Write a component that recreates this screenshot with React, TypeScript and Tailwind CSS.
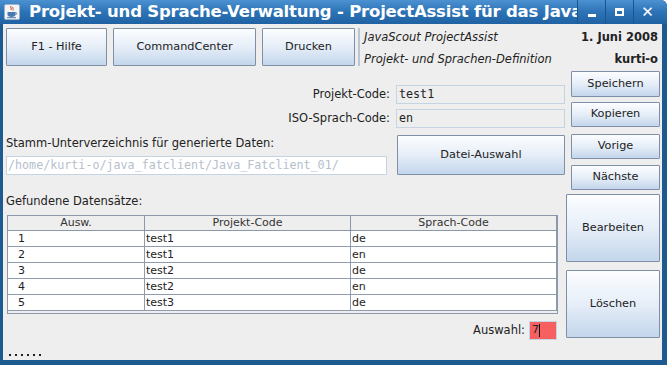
import React from 'react';

const btn =
  'border border-[#7f90a6] bg-gradient-to-b from-[#fcfdff] via-[#e6eef8] to-[#c3d6ec] rounded-[1px] flex items-center justify-center text-[11.3px] text-[#222]';

const rows = [
  ['1', 'test1', 'de'],
  ['2', 'test1', 'en'],
  ['3', 'test2', 'de'],
  ['4', 'test2', 'en'],
  ['5', 'test3', 'de'],
];

function JavaIcon() {
  return (
    <svg width="16" height="16" viewBox="0 0 16 16">
      <rect x="0.5" y="0.5" width="15" height="15" rx="1.5" fill="#f4f4f4" stroke="#9bb4cc" />
      <path d="M7 2c-1 1.5 1 2.5 0 4M9 3c-1 1 1 2 0 3.5" stroke="#d2461f" strokeWidth="1" fill="none" />
      <path d="M3.5 8h8v2.5c0 1.5-1.5 2.5-4 2.5s-4-1-4-2.5z" fill="#4a7bb0" />
      <path d="M11.5 8.5c1.5 0 1.5 2 0 2" stroke="#4a7bb0" fill="none" />
      <rect x="3" y="13.2" width="9" height="1" fill="#4a7bb0" />
    </svg>
  );
}

export default function App() {
  return (
    <div
      className="w-[667px] h-[365px] bg-[#1c5a90] flex flex-col overflow-hidden rounded-tr-[6px]"
      style={{ fontFamily: '"DejaVu Sans", Verdana, sans-serif' }}
    >
      {/* Titelleiste */}
      <div className="h-[24px] shrink-0 flex items-center bg-gradient-to-b from-[#4c92d2] via-[#2c73b6] to-[#1f62a3] text-white">
        <div className="ml-[4px] mr-[9px] flex items-center">
          <JavaIcon />
        </div>
        <div className="flex-1 overflow-hidden whitespace-nowrap font-bold text-[16.5px] leading-[24px] tracking-[-0.2px]">
          Projekt- und Sprache-Verwaltung - ProjectAssist für das Java
        </div>
        <div className="flex h-[24px] items-stretch">
          <div className="w-[28px] flex items-center justify-center border-l border-[#1a5590]">
            <div className="w-[8px] h-[3px] bg-white mt-[6px]" />
          </div>
          <div className="w-[28px] flex items-center justify-center border-l border-[#1a5590]">
            <div className="w-[9px] h-[8px] border-[2px] border-white border-t-[3px]" />
          </div>
          <div className="w-[28px] flex items-center justify-center border-l border-[#1a5590] text-[15px] font-bold">
            ✕
          </div>
          <div className="w-[6px]" />
        </div>
      </div>

      {/* Inhalt */}
      <div className="flex-1 ml-[3px] mr-[5px] mb-[5px] bg-[#eeeeee] flex flex-col text-[#222] text-[11.5px]">
        {/* obere Zeile */}
        <div className="flex items-start pt-[4px] pl-[3px] pr-[4px] h-[42px]">
          <div className={`${btn} w-[101px] h-[38px]`}>F1 - Hilfe</div>
          <div className={`${btn} w-[143px] h-[38px] ml-[6px]`}>CommandCenter</div>
          <div className={`${btn} w-[93px] h-[38px] ml-[6px]`}>Drucken</div>
          <div className="ml-[3px] h-[38px] border-l-[2px] border-[#b9c6d4]" />
          <div className="flex flex-col pl-[4px] -mt-[2px] italic text-[11.5px] leading-[22px]">
            <div>JavaScout ProjectAssist</div>
            <div>Projekt- und Sprachen-Definition</div>
          </div>
          <div className="ml-auto flex flex-col items-end -mt-[2px] font-bold text-[11.5px] leading-[22px]">
            <div>1. Juni 2008</div>
            <div>kurti-o</div>
          </div>
        </div>

        {/* Hauptbereich */}
        <div className="flex pl-[3px]">
          {/* linke Spalte */}
          <div className="w-[559px] flex flex-col">
            <div className="mt-[19px] flex items-center justify-end">
              <span className="mr-[6px]">Projekt-Code:</span>
              <div className="w-[169px] h-[19px] border border-[#c5d4e3] bg-[#eeeeee] pl-[2px] flex items-center text-[11.7px]" style={{ fontFamily: '"DejaVu Sans Mono", monospace' }}>
                test1
              </div>
            </div>
            <div className="mt-[5px] flex items-center justify-end">
              <span className="mr-[6px]">ISO-Sprach-Code:</span>
              <div className="w-[169px] h-[19px] border border-[#c5d4e3] bg-[#eeeeee] pl-[2px] flex items-center text-[11.7px]" style={{ fontFamily: '"DejaVu Sans Mono", monospace' }}>
                en
              </div>
            </div>
            <div className="mt-[7px] flex items-start">
              <div className="w-[383px] flex flex-col">
                <div className="mt-[1px] leading-[14px]">Stamm-Unterverzeichnis für generierte Daten:</div>
                <div
                  className="mt-[6px] h-[19px] border border-[#c5d4e3] bg-white pl-[1px] flex items-center text-[11.7px] text-[#b5c0cc] whitespace-nowrap overflow-hidden"
                  style={{ fontFamily: '"DejaVu Sans Mono", monospace' }}
                >
                  /home/kurti-o/java_fatclient/Java_Fatclient_01/
                </div>
              </div>
              <div className={`${btn} ml-[10px] w-[169px] h-[40px]`}>Datei-Auswahl</div>
            </div>
            <div className="mt-[20px] leading-[13px]">Gefundene Datensätze:</div>

            {/* Tabelle */}
            <div className="mt-[7px] ml-[1px] w-[551px] border border-[#8a98aa] bg-[#eeeeee] text-[11px]">
              <div className="grid grid-cols-[137px_206px_206px] bg-[#eeeeee] text-[#333] border-b border-[#8a98aa]">
                <div className="h-[14px] leading-[14px] text-center border-r border-[#8a98aa]">Ausw.</div>
                <div className="h-[14px] leading-[14px] text-center border-r border-[#8a98aa]">Projekt-Code</div>
                <div className="h-[14px] leading-[14px] text-center border-r border-[#8a98aa]">Sprach-Code</div>
              </div>
              {rows.map((r) => (
                <div key={r[0]} className="grid grid-cols-[137px_206px_206px] bg-white border-b border-[#8f9cad]">
                  <div className="h-[15px] leading-[15px] pl-[10px] border-r border-[#8f9cad]">{r[0]}</div>
                  <div className="h-[15px] leading-[15px] pl-[1px] border-r border-[#8f9cad]">{r[1]}</div>
                  <div className="h-[15px] leading-[15px] pl-[1px] border-r border-[#8f9cad]">{r[2]}</div>
                </div>
              ))}
              <div className="h-[2px]" />
            </div>

            {/* Auswahl */}
            <div className="mt-[7px] flex items-center justify-end pr-[8px]">
              <span className="mr-[4px]">Auswahl:</span>
              <div className="w-[28px] h-[19px] bg-[#f66060] border border-[#c5d4e3] flex items-center pl-[2px] text-[11px]">
                7<span className="w-px h-[13px] bg-black" />
              </div>
            </div>

            <div className="mt-[14px] ml-[3px] flex gap-[4px]">
              {[0, 1, 2, 3, 4, 5].map((i) => (
                <div key={i} className="w-[2px] h-[2px] bg-[#222]" />
              ))}
            </div>
          </div>

          {/* rechte Spalte */}
          <div className="w-[94px] ml-[1px] flex flex-col items-end">
            <div className={`${btn} mt-[5px] w-[89px] h-[26px]`}>Speichern</div>
            <div className={`${btn} mt-[5px] w-[89px] h-[25px]`}>Kopieren</div>
            <div className={`${btn} mt-[7px] w-[89px] h-[25px]`}>Vorige</div>
            <div className={`${btn} mt-[6px] w-[89px] h-[25px]`}>Nächste</div>
            <div className={`${btn} mt-[4px] w-[94px] h-[68px]`}>Bearbeiten</div>
            <div className={`${btn} mt-[8px] w-[94px] h-[68px]`}>Löschen</div>
          </div>
        </div>
      </div>
    </div>
  );
}
